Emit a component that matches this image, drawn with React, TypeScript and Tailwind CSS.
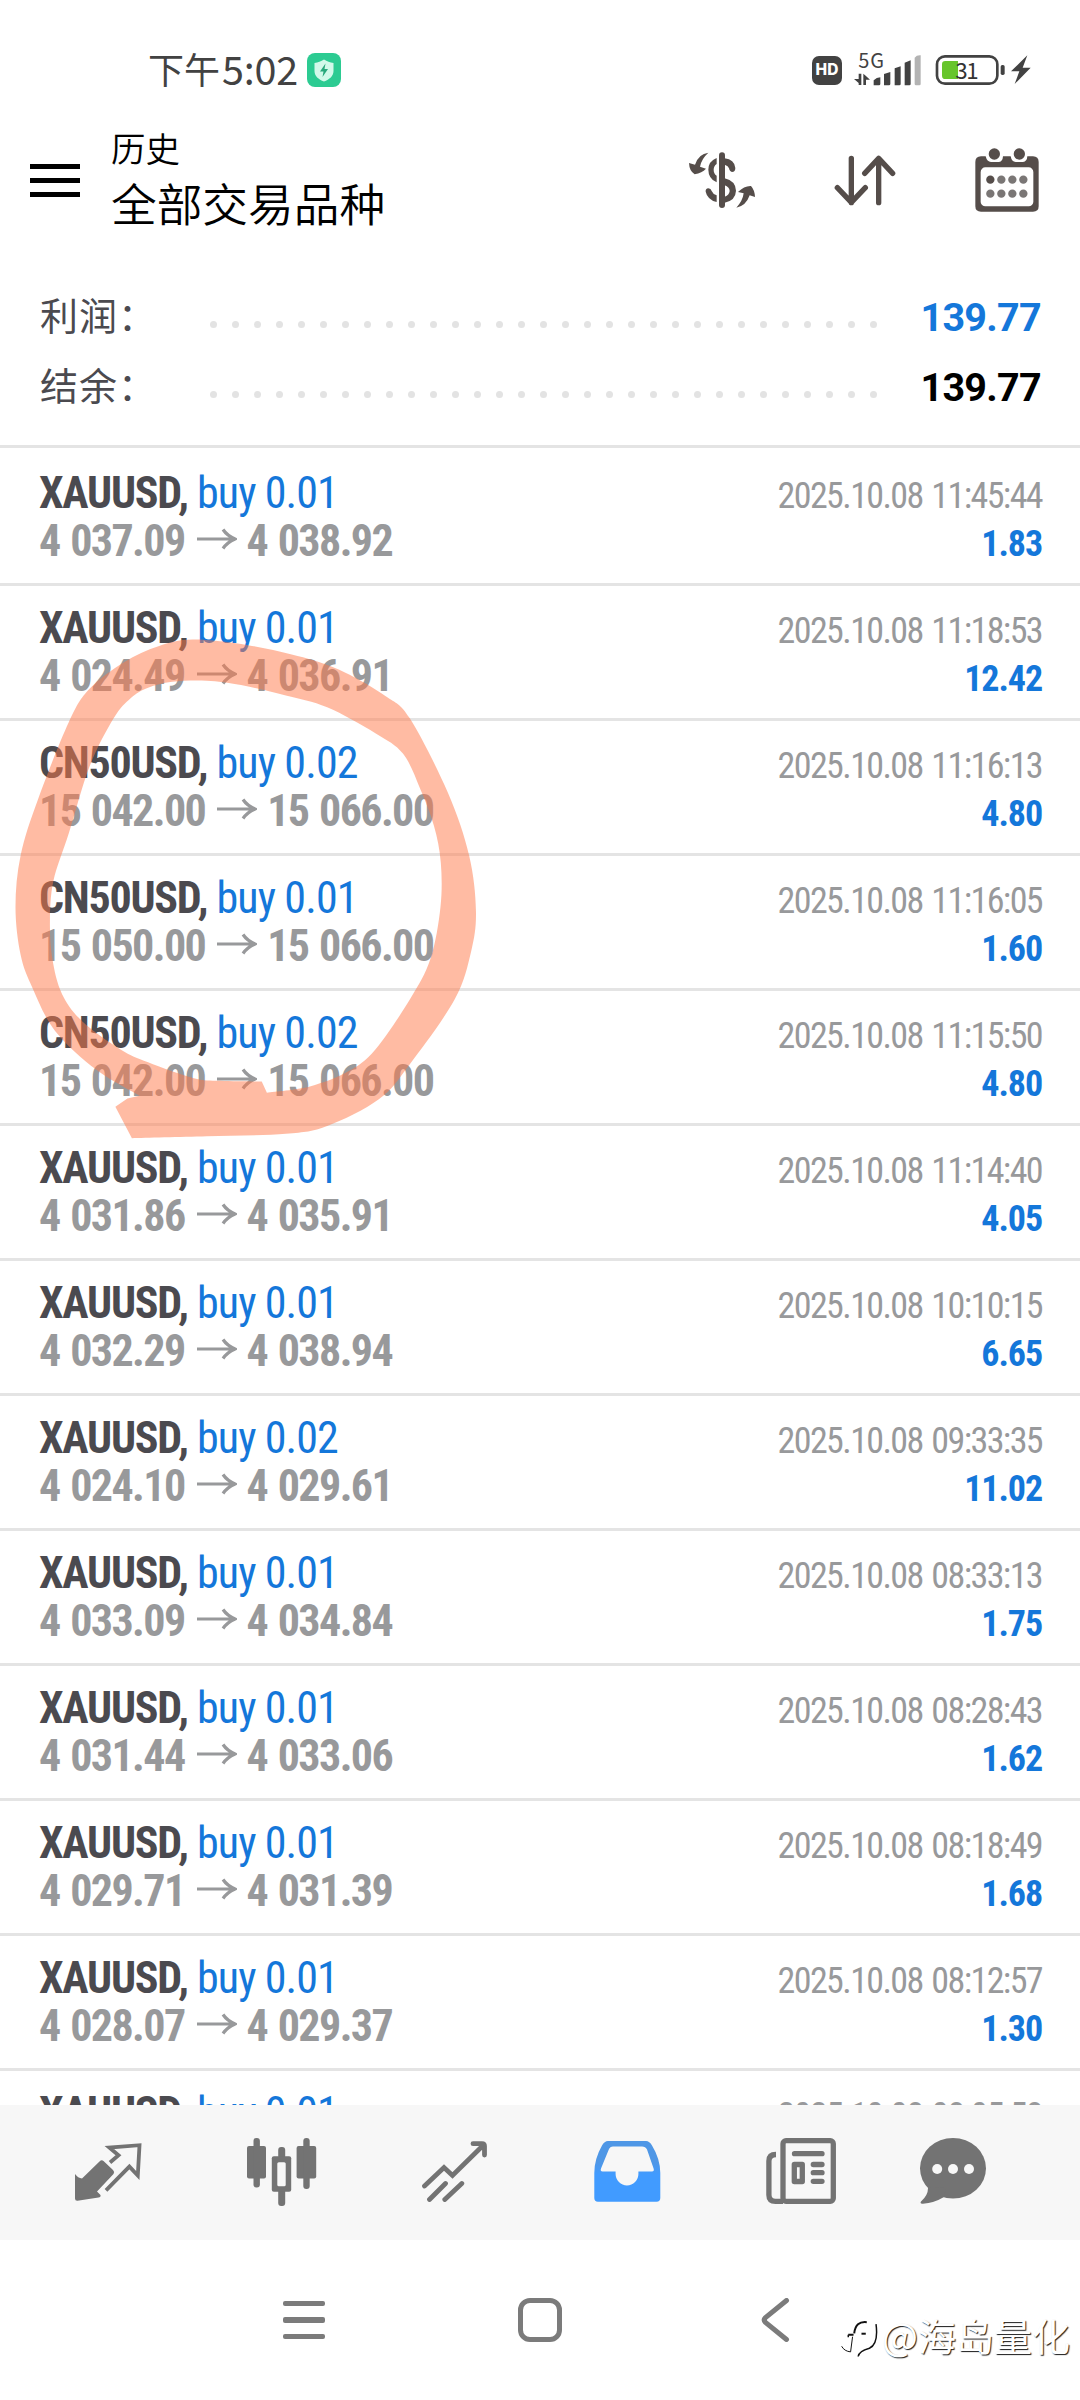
import React from "react";

type Deal = {
  symbol: string;
  volume: string;
  open: string;
  close: string;
  time: string;
  profit: string;
};

const DEALS: Deal[] = [
  { symbol: "XAUUSD", volume: "0.01", open: "4 037.09", close: "4 038.92", time: "2025.10.08 11:45:44", profit: "1.83" },
  { symbol: "XAUUSD", volume: "0.01", open: "4 024.49", close: "4 036.91", time: "2025.10.08 11:18:53", profit: "12.42" },
  { symbol: "CN50USD", volume: "0.02", open: "15 042.00", close: "15 066.00", time: "2025.10.08 11:16:13", profit: "4.80" },
  { symbol: "CN50USD", volume: "0.01", open: "15 050.00", close: "15 066.00", time: "2025.10.08 11:16:05", profit: "1.60" },
  { symbol: "CN50USD", volume: "0.02", open: "15 042.00", close: "15 066.00", time: "2025.10.08 11:15:50", profit: "4.80" },
  { symbol: "XAUUSD", volume: "0.01", open: "4 031.86", close: "4 035.91", time: "2025.10.08 11:14:40", profit: "4.05" },
  { symbol: "XAUUSD", volume: "0.01", open: "4 032.29", close: "4 038.94", time: "2025.10.08 10:10:15", profit: "6.65" },
  { symbol: "XAUUSD", volume: "0.02", open: "4 024.10", close: "4 029.61", time: "2025.10.08 09:33:35", profit: "11.02" },
  { symbol: "XAUUSD", volume: "0.01", open: "4 033.09", close: "4 034.84", time: "2025.10.08 08:33:13", profit: "1.75" },
  { symbol: "XAUUSD", volume: "0.01", open: "4 031.44", close: "4 033.06", time: "2025.10.08 08:28:43", profit: "1.62" },
  { symbol: "XAUUSD", volume: "0.01", open: "4 029.71", close: "4 031.39", time: "2025.10.08 08:18:49", profit: "1.68" },
  { symbol: "XAUUSD", volume: "0.01", open: "4 028.07", close: "4 029.37", time: "2025.10.08 08:12:57", profit: "1.30" },
  { symbol: "XAUUSD", volume: "0.01", open: "4 026.15", close: "4 027.40", time: "2025.10.08 08:05:58", profit: "1.25" },
];

/* ---------- Marker circle ---------- */

const OUTER: number[][] = [
  [383, 1455], [600, 1450], [830, 1443], [950, 1422], [1100, 1350], [1190, 1255], [1320, 1080], [1368, 950],
  [1382, 840], [1362, 690], [1300, 520], [1190, 320], [1120, 260], [1000, 195], [880, 155], [720, 122],
  [560, 107], [460, 125], [360, 168], [260, 240], [200, 330], [110, 540], [60, 690], [45, 830],
  [60, 960], [95, 1050], [160, 1165], [280, 1270], [405, 1340],
];

const INNER: number[][] = [
  [760, 1302], [640, 1300], [560, 1292], [430, 1250], [350, 1215], [240, 1140], [180, 1065], [152, 970],
  [145, 870], [155, 760], [200, 630], [260, 450], [330, 320], [380, 265], [430, 237], [500, 221],
  [600, 218], [700, 230], [830, 258], [950, 290], [1090, 360], [1170, 415], [1220, 510], [1260, 610],
  [1280, 710], [1279, 830], [1250, 970], [1190, 1080], [1090, 1215], [1010, 1275], [900, 1315], [775, 1332],
];

// Catmull-Rom through every point
function smooth(pts: number[][]) {
  let d = "";
  for (let i = 0; i < pts.length - 1; i++) {
    const p0 = pts[Math.max(i - 1, 0)];
    const p1 = pts[i];
    const p2 = pts[i + 1];
    const p3 = pts[Math.min(i + 2, pts.length - 1)];
    d += ` C${p1[0] + (p2[0] - p0[0]) / 6} ${p1[1] + (p2[1] - p0[1]) / 6} ${p2[0] - (p3[0] - p1[0]) / 6} ${p2[1] - (p3[1] - p1[1]) / 6} ${p2[0]} ${p2[1]}`;
  }
  return d;
}

function MarkerCircle() {
  return (
    <svg
      className="absolute left-0 top-[152px] w-[540px] h-[580px] pointer-events-none"
      viewBox="0 0 1568 1568"
      preserveAspectRatio="none"
    >
      <path
        fill="#ff7747"
        fillOpacity="0.5"
        fillRule="evenodd"
        d={`M335 1370 L383 1455${smooth(OUTER)} L370 1348 Z M775 1332 L760 1302${smooth(INNER)} Z`}
      />
    </svg>
  );
}

/* ---------- Status bar ---------- */

function StatusBar() {
  return (
    <div className="h-[140px] pt-[44px] flex items-start text-[#424242]">
      <div className="ml-[148px] -mt-[2px] flex items-center h-[52px]">
        <span className="font-['Noto_Sans_CJK_SC'] text-[36px] leading-[52px] w-[74px] whitespace-nowrap">下午</span>
        <span className="font-['Noto_Sans_CJK_SC'] text-[39.5px] leading-[52px] w-[85px] tracking-[-0.2px] whitespace-nowrap">5:02</span>
        <svg className="w-[34px] h-[34px] mt-[4px]" viewBox="0 0 34 34">
          <rect width="34" height="34" rx="8" fill="#2ccb92" />
          <path d="M17 6.500c3 2 6 3 9.500 3.500v8c0 5-4 8.500-9.500 10.500C11.500 26.500 7.500 23 7.500 18v-8C11 9.500 14 8.500 17 6.500z" fill="#d3f9ea" />
          <path d="M18.500 10.500 13 18.500h3.500L15.500 24 21 16h-3.500z" fill="#2aa87c" />
        </svg>
      </div>

      <div className="ml-auto mr-[49px] mt-[7px] flex items-center">
        <div className="w-[30px] h-[29px] mt-[3px] rounded-[7px] bg-[#424242] text-white flex items-center justify-center font-['Inter'] font-extrabold text-[15.5px] leading-none">
          HD
        </div>
        <svg className="ml-3 w-[68px] h-[35px] overflow-visible" viewBox="762 64 204 105">
          <text x="775" y="115" fontSize="60" fill="#424242" className="font-['Noto_Sans_CJK_SC']" textLength="77">5G</text>
          <path d="M784 132V166H776V160L762 148H776V132zM790 166V132L797 138 810 150H798V166z" fill="#424242" />
          <path d="M821 152Q830 143 841 143V163Q841 167 837 167H821zM852 133L871 127V163Q871 167 867 167H852zM884 116L902 110V163Q902 167 898 167H884zM914 99L932 92V163Q932 167 928 167H914z" fill="#424242" />
          <path d="M944 84Q950 76 962 77V163Q962 167 958 167H948Q944 167 944 163z" fill="#b3b3b3" />
        </svg>
        <svg className="ml-[13px] w-[70px] h-[32px] mt-[3px]" viewBox="1003 72 210 96">
          <rect x="1009" y="79" width="181" height="82" rx="24" fill="none" stroke="#424242" strokeWidth="8" />
          <path d="M1034 93h38v54h-38q-10 0-10-10v-34q0-10 10-10z" fill="#67c52c" />
          <rect x="1200" y="105" width="12" height="30" rx="5" fill="#424242" />
          <text x="1064" y="147" fontSize="67" fill="#333" className="font-['Noto_Sans_CJK_SC']" textLength="70">31</text>
        </svg>
        <svg className="ml-[6px] w-5 h-[30px] mt-[3px]" viewBox="1232 78 60 90">
          <path d="M1281 79 1232 127H1257L1243 165 1291 116H1267z" fill="#424242" />
        </svg>
      </div>
    </div>
  );
}

/* ---------- Header ---------- */

function CurrencyIcon() {
  return (
    <svg className="w-[68px] h-[57px]" viewBox="264 369 204 171" fill="#554d4a">
      <rect x="357" y="370" width="18" height="167" rx="9" />
      <path d="M350 387Q325 397 325 422Q325 449 350 460V440Q341 434 341 422Q341 411 350 405z" />
      <path d="M374 388Q403 391 406 417Q406 429 396 429Q389 428 387 418Q385 411 374 407z" />
      <path d="M374 448Q407 456 408 485Q407 514 374 521V503Q388 498 389 486Q388 474 374 469z" />
      <path d="M350 519Q322 512 317 488Q316 479 325 478Q333 478 335 486Q339 496 350 499z" />
      <path d="M325 371Q296 374 285 407L267 402Q268 426 284 436Q306 432 318 419L300 413Q304 390 325 371z" />
      <path d="M409 536Q438 531 449 499L465 504Q464 483 453 471Q433 470 414 489L431 493Q428 516 409 536z" />
    </svg>
  );
}

function SortIcon() {
  return (
    <svg className="w-[62px] h-[51px]" viewBox="702 376 186 153" fill="none" stroke="#554d4a" strokeWidth="16" strokeLinecap="round" strokeLinejoin="round">
      <path d="M754 386V519M712 474L754 518L796 474" />
      <path d="M836 519V386M794 431L836 386L878 431" />
    </svg>
  );
}

function CalendarIcon() {
  return (
    <svg className="w-16 h-16" viewBox="1124 353 192 192">
      <path d="M1142 378H1156Q1160 395 1172 395H1196Q1207 394 1208 378H1231Q1234 395 1246 395H1268Q1280 394 1281 378H1298Q1315 379 1315 395V528Q1315 544 1298 544H1142Q1125 544 1125 528V395Q1125 379 1142 378z" fill="#554d4a" />
      <rect x="1141" y="411" width="158" height="117" rx="14" fill="#fff" />
      <circle cx="1182" cy="371" r="17" fill="#554d4a" />
      <circle cx="1257" cy="371" r="17" fill="#554d4a" />
      {[1170, 1203, 1236, 1269].map((x) => (
        <React.Fragment key={x}>
          <circle cx={x} cy="448" r="12.500" fill={x === 1170 ? "#554d4a" : "#7a7675"} />
          <circle cx={x} cy="490" r="12.500" fill="#7a7675" />
        </React.Fragment>
      ))}
    </svg>
  );
}

function Header() {
  return (
    <header className="h-[130px] flex items-start text-black">
      <div className="ml-[30px] mt-[24px] w-[50px] flex flex-col gap-[9px]">
        <div className="h-[5px] bg-black" />
        <div className="h-[5px] bg-black" />
        <div className="h-[5px] bg-black" />
      </div>
      <div className="ml-[31px] -mt-[15px] font-['Noto_Sans_CJK_SC'] font-[350] whitespace-nowrap">
        <div className="text-[34.5px] leading-[44px]">历史</div>
        <div className="text-[45.7px] leading-[66px]">全部交易品种</div>
      </div>
      <div className="ml-auto mr-[41px] mt-[8px] flex items-center">
        <CurrencyIcon />
        <div className="ml-[78px]"><SortIcon /></div>
        <div className="ml-[79px]"><CalendarIcon /></div>
      </div>
    </header>
  );
}

/* ---------- Totals ---------- */

function SummaryRow({ label, value, valueClass }: { label: string; value: string; valueClass: string }) {
  return (
    <div className="h-[70px] flex items-center pl-[40px] pr-[39px]">
      <span className="w-[170px] -mt-[6px] font-['Noto_Sans_CJK_SC'] text-[38px] tracking-[1px] leading-[70px] text-[#4b4a4f] whitespace-nowrap">{label}</span>
      <div className="w-[667px] flex justify-between mt-[15px]">
        {Array.from({ length: 31 }).map((_, i) => (
          <span key={i} className="w-[7px] h-[7px] rounded-full bg-[#e3e3e3]" />
        ))}
      </div>
      <span className={`ml-auto mt-[2px] font-['Roboto'] font-bold text-[39.5px] tracking-[-0.7px] leading-[70px] ${valueClass}`}>{value}</span>
    </div>
  );
}

/* ---------- Deals ---------- */

function DealRow({ deal }: { deal: Deal }) {
  return (
    <div className="h-[135px] shrink-0 border-b-[3px] border-[#e4e4e4] pt-[18px] pl-[39px] pr-[38px] font-['Roboto_Condensed'] whitespace-nowrap">
      <div className="h-[48px] flex items-baseline justify-between leading-[48px]">
        <div className="text-[44px]">
          <span className="font-bold tracking-[-1.25px] text-[#4b4a4f]">{deal.symbol},</span>
          <span className="tracking-[-0.9px] text-[#1477da]"> buy {deal.volume}</span>
        </div>
        <span className="text-[36px] tracking-[-1.6px] [word-spacing:2px] text-[#98999b]">{deal.time}</span>
      </div>
      <div className="h-[48px] flex items-baseline justify-between leading-[48px]">
        <div className="text-[44px] font-bold tracking-[-1.6px] [word-spacing:2px] text-[#98999b] flex items-baseline">
          <span>{deal.open}</span>
          <svg className="w-10 h-[22px] ml-[12px] mr-[10px] -translate-y-[6px]" viewBox="0 0 40 22" fill="none" stroke="#98999b" strokeWidth="3.200">
            <path d="M0 11H37M26 1.500Q30 7.500 38 11Q30 14.500 26 20.500" />
          </svg>
          <span>{deal.close}</span>
        </div>
        <span className="text-[36px] font-bold tracking-[-1.1px] text-[#1477da]">{deal.profit}</span>
      </div>
    </div>
  );
}

/* ---------- Bottom tabs ---------- */

function TabBar() {
  return (
    <nav className="h-[135px] shrink-0 bg-[#f7f7f7] pl-[22px] flex items-start pt-[33px]">
      <div className="w-[173px] flex justify-center pt-[5px]">
        <svg className="w-[67px] h-[59px]" viewBox="0 0 67 59">
          <path d="M0 31Q3 35 7 35.500L24.500 18.500Q26.500 16.500 28.500 18L38 27Q40 29 38.500 31L22 48.500 25.500 52Q26 54 23.500 54.500L2.500 57.800Q0 58 0 55.500z" fill="#737373" />
          <path d="M35 19.500 43.500 12.300 34.300 4.500 64.500 2.200 62.800 32.500 54.400 23.600 31 47.300" fill="none" stroke="#737373" strokeWidth="3.800" />
        </svg>
      </div>
      <div className="w-[173px] flex justify-center">
        <svg className="w-[70px] h-[68px]" viewBox="0 0 70 68" fill="#737373">
          <rect x="0" y="8" width="19" height="32.500" rx="2" />
          <rect x="6.500" y="0" width="6.400" height="49.500" rx="3" />
          <rect x="49.600" y="8" width="19.600" height="32.500" rx="2" />
          <rect x="56.300" y="0" width="6.400" height="51" rx="3" />
          <rect x="31.200" y="9" width="7" height="12" rx="3" />
          <rect x="31.200" y="50" width="7" height="18" rx="3" />
          <rect x="24.800" y="18.300" width="19.400" height="35.500" rx="2" />
          <rect x="30.300" y="24.200" width="8.400" height="24" rx="1.500" fill="#f7f7f7" />
        </svg>
      </div>
      <div className="w-[173px] flex justify-center pt-[3px]">
        <svg className="w-[66px] h-[61px]" viewBox="0 0 66 61" fill="none" stroke="#737373" strokeWidth="4.800" strokeLinecap="round">
          <path d="M2.500 45 22 26.500 30.500 34.500 61.500 4M51 2.700H60Q62.500 2.700 62.500 5V14" />
          <path d="M7.500 58.500 23.500 42.500M22.800 58.500 39.800 42.500" />
        </svg>
      </div>
      <div className="w-[173px] flex justify-center pt-[3px]">
        <svg className="w-[67px] h-[61px]" viewBox="0 0 67 61">
          <defs>
            <linearGradient id="tray" x1="0" y1="0" x2="0" y2="1">
              <stop offset="0.350" stopColor="#4f97e6" />
              <stop offset="0.550" stopColor="#419bff" />
            </linearGradient>
          </defs>
          <path
            fillRule="evenodd"
            fill="url(#tray)"
            d="M14 0H52Q55.500 0 58 4.500Q66.300 18 66.300 32V57Q66.300 60.700 62.500 60.700H4Q0.300 60.700 0.300 57V32Q0.300 18 8 4.500Q10.500 0 14 0zM19 5.500Q16 5.500 14.800 8.500L7 27.500Q6 30.500 8.500 30.500H21.600V33A11.400 11.400 0 0 0 44.400 33V30.500H58Q60.500 30.500 59.600 27.500L53 8.500Q51.500 5.500 48 5.500z"
          />
        </svg>
      </div>
      <div className="w-[173px] flex justify-center">
        <svg className="w-[70px] h-[66px]" viewBox="0 0 70 66" fill="none" stroke="#737373" strokeWidth="5.300" strokeLinejoin="round">
          <rect x="17" y="2.700" width="50.300" height="60.600" rx="3" />
          <path d="M10 16.500Q2.900 16.500 2.900 23V57Q2.900 63.300 9.500 63.300H17" />
          <path d="M28.500 15.700H56M47.300 26.500H56M47.300 34.700H56M47.300 43.300H56" strokeLinecap="round" />
          <rect x="28.300" y="26.500" width="8" height="17" />
        </svg>
      </div>
      <div className="w-[132px] flex justify-center">
        <svg className="w-[66px] h-[66px]" viewBox="0 0 66 66">
          <ellipse cx="33" cy="30.300" rx="33" ry="30.300" fill="#737373" />
          <path d="M8 49Q8.500 57 1 63.500Q-0.500 66 3 65.800Q14 65 24 59L26 50z" fill="#737373" />
          <circle cx="17.200" cy="31" r="5" fill="#f7f7f7" />
          <circle cx="33" cy="31" r="5" fill="#f7f7f7" />
          <circle cx="49" cy="31" r="5" fill="#f7f7f7" />
        </svg>
      </div>
    </nav>
  );
}

/* ---------- System navigation + watermark ---------- */

function SystemNav() {
  return (
    <div className="relative h-[160px] shrink-0 bg-white">
      <div className="flex items-center h-[160px] pl-[283px]">
        <div className="w-[42px] flex flex-col gap-[11px]">
          <div className="h-[5px] rounded-[2px] bg-[#7b7b7b]" />
          <div className="h-[6px] rounded-[2px] bg-[#7b7b7b]" />
          <div className="h-[5px] rounded-[2px] bg-[#7b7b7b]" />
        </div>
        <div className="ml-[193px] w-[44px] h-[44px] rounded-[12px] border-[5px] border-[#7b7b7b]" />
        <svg className="ml-[199px] w-[30px] h-[44px]" viewBox="0 0 30 44" fill="none" stroke="#7b7b7b" strokeWidth="5" strokeLinecap="round">
          <path d="M25.500 2.500 4.500 19.500Q2 22 4.500 24.500L25.500 41.500" />
        </svg>
      </div>
      <div className="absolute left-[841px] top-[67px] flex items-center h-[56px]">
        <svg className="w-[37px] h-[38px] mt-[8px]" viewBox="18 78 112 114" fill="none" stroke="#111">
          <path d="M96 84Q62 80 58 118M40 122H56" strokeWidth="6" />
          <path d="M40 122V130M124 90Q132 150 104 163Q72 172 70 188" strokeWidth="4.500" />
          <path d="M80 119H93" strokeWidth="6" />
          <path d="M20 157Q28 172 47 174L53 128" strokeWidth="3" />
        </svg>
        <span className="ml-[4px] font-['Noto_Sans_CJK_SC'] text-[38px] leading-[56px] text-white whitespace-nowrap [text-shadow:1px_1px_1px_rgba(0,0,0,0.9)]">@海岛量化</span>
      </div>
    </div>
  );
}

export default function App() {
  return (
    <div className="w-[1080px] h-[2400px] bg-white overflow-hidden flex flex-col">
      <StatusBar />
      <Header />
      <section className="h-[178px] shrink-0 pt-[12px] border-b-[3px] border-[#e4e4e4]">
        <SummaryRow label="利润：" value="139.77" valueClass="text-[#1477da]" />
        <SummaryRow label="结余：" value="139.77" valueClass="text-black" />
      </section>
      <div className="relative h-[1657px] shrink-0 overflow-hidden pt-[3px] flex flex-col">
        {DEALS.map((deal) => (
          <DealRow key={deal.time} deal={deal} />
        ))}
        <MarkerCircle />
      </div>
      <TabBar />
      <SystemNav />
    </div>
  );
}
